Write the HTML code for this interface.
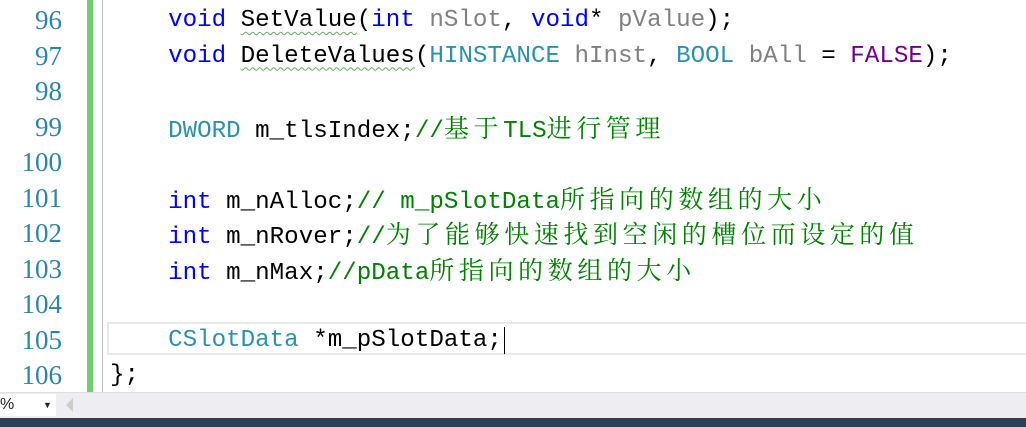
<!DOCTYPE html>
<html><head><meta charset="utf-8"><style>
body{margin:0;width:1026px;height:427px;overflow:hidden;background:#fff;position:relative;font-family:"Liberation Mono","Noto Serif CJK SC",monospace}
.ln{position:absolute;left:0;width:62px;text-align:right;color:#2b85a8;font-size:27px;font-family:"Liberation Serif",serif;line-height:35.5px}
.c{position:absolute;left:110px;white-space:pre;font-size:24.2px;line-height:35.5px;color:#000}
.k{color:#0000ff}.t{color:#2b91af}.p{color:#808080}.m{color:#6f008a}.g{color:#008000}
.z{font-family:"Noto Serif CJK SC",serif;font-size:25px;letter-spacing:4.6px}
.sq{text-decoration:underline wavy #6a6;text-underline-offset:5px;text-decoration-thickness:1px}
</style></head><body>
<div style="position:absolute;left:87px;top:0;width:6px;height:392px;background:#6fcf6f"></div>
<div style="position:absolute;left:102px;top:0;width:1px;height:392px;background:#bbb"></div>
<div style="position:absolute;left:107px;top:322px;width:925px;height:33px;border:2px solid #e8e8e8;box-sizing:border-box"></div>
<div class="ln" style="top:3px">96</div>
<div class="ln" style="top:38.5px">97</div>
<div class="ln" style="top:74px">98</div>
<div class="ln" style="top:109.5px">99</div>
<div class="ln" style="top:145px">100</div>
<div class="ln" style="top:180.5px">101</div>
<div class="ln" style="top:216px">102</div>
<div class="ln" style="top:251.5px">103</div>
<div class="ln" style="top:287px">104</div>
<div class="ln" style="top:322.5px">105</div>
<div class="ln" style="top:358px">106</div>
<div class="c" style="top:3px">    <span class="k">void</span> <span class="sq">SetValue</span>(<span class="k">int</span> <span class="p">nSlot</span>, <span class="k">void</span>* <span class="p">pValue</span>);</div>
<div class="c" style="top:38.5px">    <span class="k">void</span> <span class="sq">DeleteValues</span>(<span class="t">HINSTANCE</span> <span class="p">hInst</span>, <span class="t">BOOL</span> <span class="p">bAll</span> = <span class="m">FALSE</span>);</div>
<div class="c" style="top:109.5px">    <span class="t">DWORD</span> m_tlsIndex;<span class="g">//<span class="z">基于</span>TLS<span class="z">进行管理</span></span></div>
<div class="c" style="top:180.5px">    <span class="k">int</span> m_nAlloc;<span class="g">// m_pSlotData<span class="z">所指向的数组的大小</span></span></div>
<div class="c" style="top:216px">    <span class="k">int</span> m_nRover;<span class="g">//<span class="z">为了能够快速找到空闲的槽位而设定的值</span></span></div>
<div class="c" style="top:251.5px">    <span class="k">int</span> m_nMax;<span class="g">//pData<span class="z">所指向的数组的大小</span></span></div>
<div class="c" style="top:322.5px">    <span class="t">CSlotData</span> *m_pSlotData;<span style="border-left:1px solid #000;margin-left:2px"></span></div>
<div class="c" style="top:358px">};</div>
<div style="position:absolute;left:0;top:392px;width:1026px;height:26px;background:#eeeef2;border-top:1px solid #ddd"></div>
<div style="position:absolute;left:0;top:394px;width:56px;height:22px;background:#fff;font:16px 'Liberation Sans',sans-serif;color:#222;line-height:22px">%<span style="position:absolute;left:43px;top:0;font-size:9px">▼</span></div>
<div style="position:absolute;left:66px;top:398px;width:0;height:0;border-top:7px solid transparent;border-bottom:7px solid transparent;border-right:7px solid #ccc"></div>
<div style="position:absolute;left:0;top:418px;width:1026px;height:9px;background:#2e3f58"></div>
</body></html>
